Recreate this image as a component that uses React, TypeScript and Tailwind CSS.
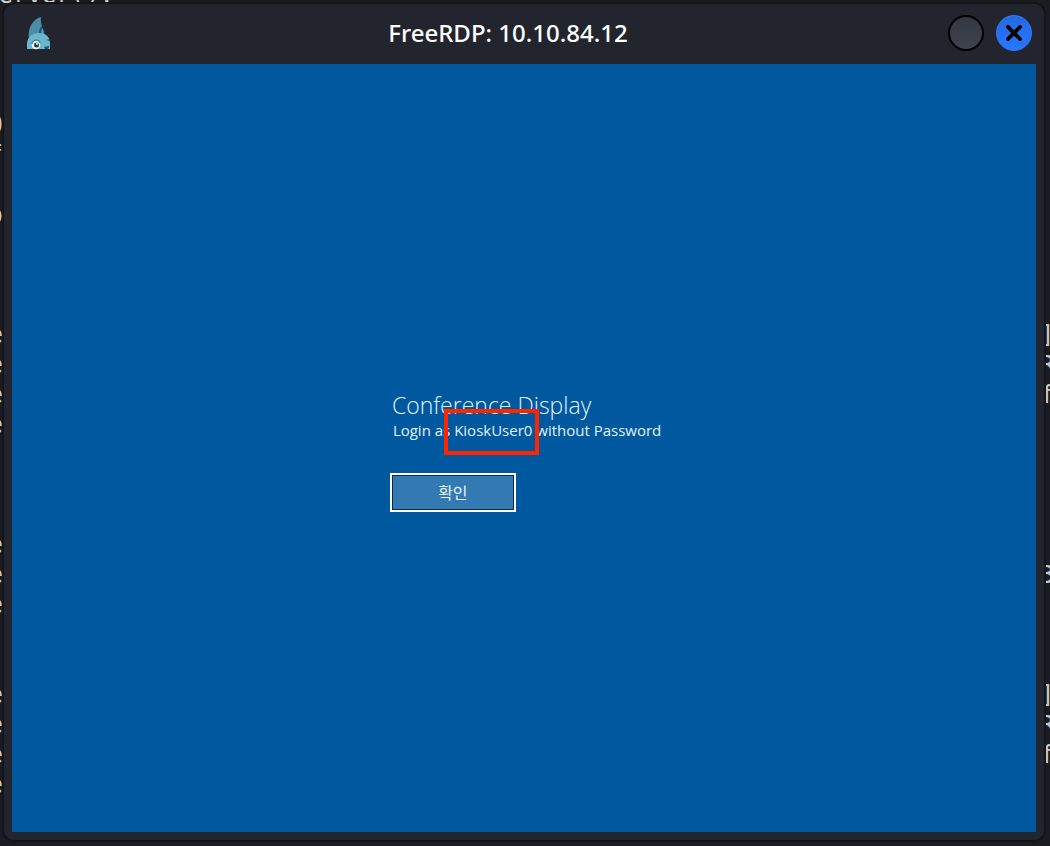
import React from "react";

type Line = { left?: string; right?: string };

const terminalLines: Line[] = [
  {}, {}, {},
  { left: "0" }, { left: "f" }, {}, { left: "o" }, {}, {}, {},
  { left: "e", right: "]" }, { left: "e", right: "R" }, { left: "e", right: "f" }, { left: "e" },
  {}, {}, {},
  { left: "e" }, { left: "e", right: "3" }, { left: "e" },
  {}, {},
  { left: "e", right: "]" }, { left: "e", right: "R" }, { left: "e", right: "f" }, { left: "e" },
  {},
];

function Terminal() {
  return (
    <div
      aria-hidden="true"
      className="absolute inset-0 overflow-hidden font-['DejaVu_Sans_Mono',monospace] text-2xl text-[#c9cbcf]"
    >
      <div className="flex h-5">
        <span className="-mt-5 -ml-4 block h-10 leading-[30px] whitespace-pre">server():</span>
      </div>
      {terminalLines.map((line, i) => (
        <div key={i} className="flex h-[30px] justify-between leading-[30px]">
          <span className="flex w-[3px] justify-end">{line.left}</span>
          <span className="w-[10px]">{line.right}</span>
        </div>
      ))}
    </div>
  );
}

function DragonLogo() {
  return (
    <svg viewBox="0 0 26 34" className="h-[34px] w-[26px]" aria-hidden="true">
      <path d="M3 24C1 12 7 3 15 1c-1 4 1 7 1 11l-1 10z" fill="#498da8" />
      <path d="M13 18c0-4 1-6 2-8 3 3 4 6 4 10z" fill="#17577b" />
      <path d="M15 17c0-2 1-4 1-5 2 3 2 5 1 7z" fill="#559db5" />
      <path d="M1 33V27C2 20 7 17 13 17c6 0 10 3 11 9v7z" fill="#6bb6ca" />
      <path d="M20 24l4-1v2zM18 31l5-1v1l-1 2h-3z" fill="#17577b" />
      <circle cx="10" cy="29" r="4.3" fill="#f4fafb" />
      <path d="M6 28c0-5 8-5 8-1" fill="none" stroke="#24617f" strokeWidth="1" />
      <circle cx="10.5" cy="29" r="2.5" fill="#173e54" />
      <circle cx="11" cy="28" r="1" fill="#fff" />
    </svg>
  );
}

function TitleBar() {
  return (
    <header className="flex h-[60px] items-center pr-3 pb-[2px] pl-[22px]">
      <DragonLogo />
      <h1 className="flex-1 pl-4 text-center font-['Noto_Sans',sans-serif] text-2xl leading-[30px] font-medium text-white">
        FreeRDP: 10.10.84.12
      </h1>
      <div className="flex gap-3">
        <button
          type="button"
          aria-label="Minimize"
          className="size-9 rounded-full border-2 border-black bg-linear-to-b from-[#343842] to-[#3d424e]"
        />
        <button
          type="button"
          aria-label="Close"
          className="flex size-9 items-center justify-center rounded-full border border-[#2a7aff] bg-linear-to-b from-[#2469e0] to-[#2777ff]"
        >
          <svg viewBox="0 0 16 16" className="size-4" aria-hidden="true">
            <path d="M2 2l12 12M14 2L2 14" stroke="#000" strokeWidth="3.8" strokeLinecap="square" />
          </svg>
        </button>
      </div>
    </header>
  );
}

function LogonNotice() {
  return (
    <main className="flex-1 bg-[#00589f] px-[37%] pt-[323px] font-['Open_Sans','Noto_Sans_CJK_KR',sans-serif] text-[#e3f2fc]">
      <div className="w-max">
        <h2 className="pl-px text-[23px] leading-9 font-light">Conference Display</h2>
        <p className="relative pl-[2px] text-[15px] leading-[14px]">
          Login as KioskUser0 without Password
          <span
            aria-hidden="true"
            className="absolute -top-[14px] left-[53px] h-[46px] w-[95px] border-4 border-[#ff2500]"
          />
        </p>
        <button
          type="button"
          className="mt-9 -ml-px block border-2 border-white bg-white text-base"
        >
          <span className="flex h-[35px] w-[122px] items-center justify-center border border-[#062c50] bg-[#337ab2]">
            확인
          </span>
        </button>
      </div>
    </main>
  );
}

export default function App() {
  return (
    <div className="relative flex min-h-screen flex-col bg-[#1b1c22]">
      <Terminal />
      <div className="relative mt-[2px] mr-1 mb-1 ml-[2px] flex flex-1 flex-col rounded-[12px] border-2 border-[#14151a] bg-[#23252e] pr-2 pb-2 pl-2">
        <div className="-mx-2">
          <TitleBar />
        </div>
        <LogonNotice />
      </div>
    </div>
  );
}
